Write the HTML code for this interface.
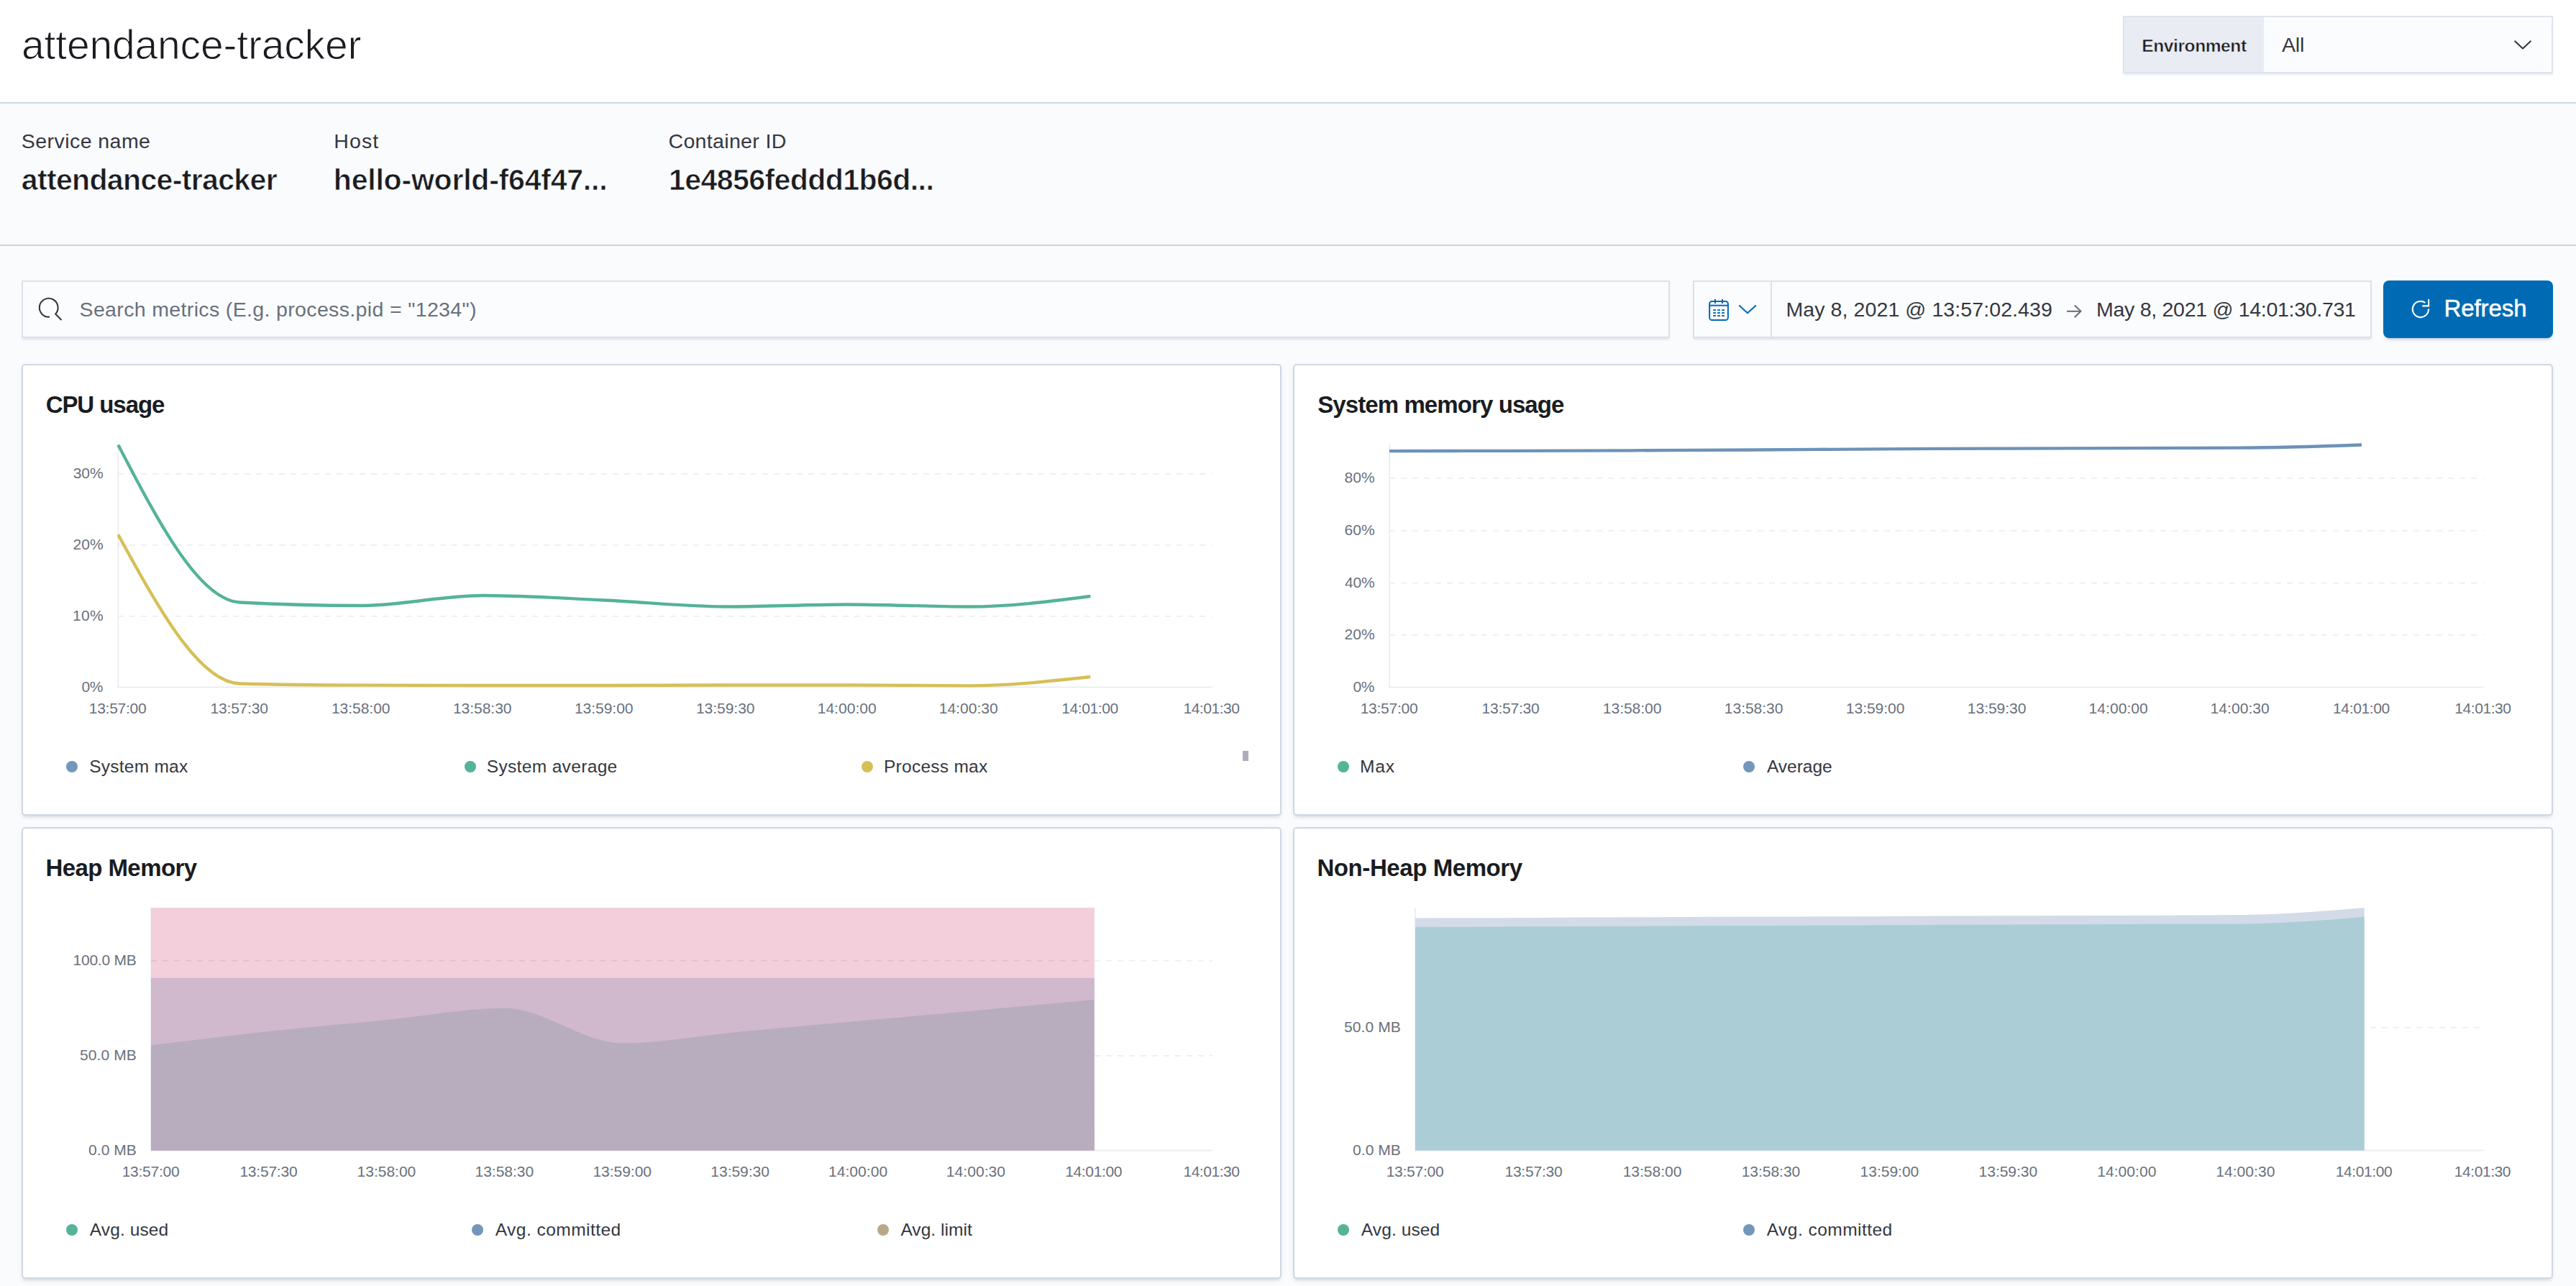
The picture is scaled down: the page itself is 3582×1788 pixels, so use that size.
<!DOCTYPE html>
<html><head><meta charset="utf-8"><title>attendance-tracker</title>
<style>
html,body{margin:0;padding:0;}
body{width:3582px;height:1788px;position:relative;overflow:hidden;background:#fafbfd;font-family:"Liberation Sans",sans-serif;}
div,span,svg{position:absolute;box-sizing:border-box;}
span{white-space:pre;line-height:1;}
</style></head><body>
<div style="left:0px;top:0px;width:3582px;height:143px;background:#fff;"></div>
<div style="left:0px;top:142px;width:3582px;height:2px;background:#cfd7e4;"></div>
<div style="left:0px;top:340px;width:3582px;height:2px;background:#cfd7e4;"></div>
<div style="left:2952px;top:22px;width:598px;height:80px;background:#fbfcfd;border:2px solid #dee3ee;box-shadow:0 3px 3px -1px rgba(152,162,179,.25);"></div>
<div style="left:2954px;top:24px;width:194px;height:76px;background:#e9ecf3;"></div>
<div style="left:30px;top:390px;width:2292px;height:80px;background:#fbfcfd;border:2px solid #dde1ec;box-shadow:0 3px 3px -1px rgba(152,162,179,.3);"></div>
<div style="left:2354px;top:390px;width:944px;height:80px;background:#fbfcfd;border:2px solid #dde1ec;box-shadow:0 3px 3px -1px rgba(152,162,179,.3);"></div>
<div style="left:2462px;top:392px;width:2px;height:76px;background:#dde1ec;"></div>
<div style="left:3314px;top:390px;width:236px;height:80px;background:#006bb4;border-radius:8px;box-shadow:0 4px 5px -3px rgba(60,90,140,.45);"></div>
<div style="left:30px;top:506px;width:1752px;height:628px;background:#fff;border:2px solid #cfd7e4;border-radius:5px;box-shadow:0 4px 4px -2px rgba(152,162,179,.3),0 2px 10px -4px rgba(152,162,179,.3);"></div>
<div style="left:1798px;top:506px;width:1752px;height:628px;background:#fff;border:2px solid #cfd7e4;border-radius:5px;box-shadow:0 4px 4px -2px rgba(152,162,179,.3),0 2px 10px -4px rgba(152,162,179,.3);"></div>
<div style="left:30px;top:1150px;width:1752px;height:628px;background:#fff;border:2px solid #cfd7e4;border-radius:5px;box-shadow:0 4px 4px -2px rgba(152,162,179,.3),0 2px 10px -4px rgba(152,162,179,.3);"></div>
<div style="left:1798px;top:1150px;width:1752px;height:628px;background:#fff;border:2px solid #cfd7e4;border-radius:5px;box-shadow:0 4px 4px -2px rgba(152,162,179,.3),0 2px 10px -4px rgba(152,162,179,.3);"></div>
<div style="left:91.9px;top:1057.9px;width:16.2px;height:16.2px;border-radius:50%;background:#7496bb;"></div>
<div style="left:645.5px;top:1057.9px;width:16.2px;height:16.2px;border-radius:50%;background:#54b399;"></div>
<div style="left:1197.5px;top:1057.9px;width:16.2px;height:16.2px;border-radius:50%;background:#d6bf57;"></div>
<div style="left:1860.0px;top:1057.9px;width:16.2px;height:16.2px;border-radius:50%;background:#54b399;"></div>
<div style="left:2424.0px;top:1057.9px;width:16.2px;height:16.2px;border-radius:50%;background:#7496bb;"></div>
<div style="left:92.0px;top:1701.9px;width:16.2px;height:16.2px;border-radius:50%;background:#54b399;"></div>
<div style="left:655.9px;top:1701.9px;width:16.2px;height:16.2px;border-radius:50%;background:#7496bb;"></div>
<div style="left:1219.9px;top:1701.9px;width:16.2px;height:16.2px;border-radius:50%;background:#b9a888;"></div>
<div style="left:1860.0px;top:1701.9px;width:16.2px;height:16.2px;border-radius:50%;background:#54b399;"></div>
<div style="left:2423.9px;top:1701.9px;width:16.2px;height:16.2px;border-radius:50%;background:#7496bb;"></div>
<div style="left:1728px;top:1044px;width:8px;height:14px;background:#b0abbd;"></div>
<svg width="3582" height="1788" viewBox="0 0 3582 1788" style="left:0;top:0"><line x1="164" y1="658.8" x2="1685.5" y2="658.8" stroke="#eceef3" stroke-width="1.7" stroke-dasharray="8 8"/><line x1="164" y1="757.8" x2="1685.5" y2="757.8" stroke="#eceef3" stroke-width="1.7" stroke-dasharray="8 8"/><line x1="164" y1="856.9" x2="1685.5" y2="856.9" stroke="#eceef3" stroke-width="1.7" stroke-dasharray="8 8"/><line x1="164.3" y1="618" x2="164.3" y2="956.5" stroke="#eceef4" stroke-width="2"/><line x1="163.3" y1="955.5" x2="1685.5" y2="955.5" stroke="#eceef4" stroke-width="2"/><path d="M164.3,618.5C220.6,726.5 277.0,834.5 333.3,837.5C389.6,840.5 446.0,842.0 502.3,842.0C558.6,842.0 615.0,828.0 671.3,828.0C727.6,828.0 784.0,831.9 840.3,834.5C896.6,837.1 953.0,843.5 1009.3,843.5C1065.6,843.5 1122.0,840.5 1178.3,840.5C1234.6,840.5 1291.0,843.5 1347.3,843.5C1403.6,843.5 1460.0,836.2 1516.3,829.0" fill="none" stroke="#54b399" stroke-width="4.3" stroke-linejoin="round"/><path d="M164.3,743.4C220.6,846.2 277.0,949.0 333.3,950.5C389.6,952.0 446.0,952.5 502.3,952.7C558.6,952.9 615.0,953.0 671.3,953.0C727.6,953.0 784.0,953.0 840.3,953.0C896.6,953.0 953.0,952.5 1009.3,952.5C1065.6,952.5 1122.0,952.5 1178.3,952.5C1234.6,952.5 1291.0,953.3 1347.3,953.3C1403.6,953.3 1460.0,947.1 1516.3,941.0" fill="none" stroke="#d6bf57" stroke-width="4.3"/><line x1="1932" y1="664.8" x2="3453.5" y2="664.8" stroke="#eceef3" stroke-width="1.7" stroke-dasharray="8 8"/><line x1="1932" y1="737.9" x2="3453.5" y2="737.9" stroke="#eceef3" stroke-width="1.7" stroke-dasharray="8 8"/><line x1="1932" y1="810.6" x2="3453.5" y2="810.6" stroke="#eceef3" stroke-width="1.7" stroke-dasharray="8 8"/><line x1="1932" y1="882.8" x2="3453.5" y2="882.8" stroke="#eceef3" stroke-width="1.7" stroke-dasharray="8 8"/><line x1="1932" y1="618" x2="1932" y2="956.5" stroke="#eceef4" stroke-width="2"/><line x1="1931" y1="955.5" x2="3453.5" y2="955.5" stroke="#eceef4" stroke-width="2"/><path d="M1932.0,627.2C1988.3,627.1 2044.7,626.9 2101.0,626.8C2157.3,626.6 2213.7,626.5 2270.0,626.3C2326.3,626.1 2382.7,625.8 2439.0,625.5C2495.3,625.2 2551.7,624.6 2608.0,624.3C2664.3,624.0 2720.7,623.8 2777.0,623.6C2833.3,623.4 2889.7,623.2 2946.0,623.1C3002.3,623.0 3058.7,623.0 3115.0,622.7C3171.3,622.4 3227.7,620.5 3284.0,618.5" fill="none" stroke="#6d92b8" stroke-width="4.3"/><line x1="210" y1="1335.6" x2="1685.5" y2="1335.6" stroke="#eceef3" stroke-width="1.7" stroke-dasharray="8 8"/><line x1="210" y1="1467.8" x2="1685.5" y2="1467.8" stroke="#eceef3" stroke-width="1.7" stroke-dasharray="8 8"/><line x1="210" y1="1262" x2="210" y2="1600.5" stroke="#eceef4" stroke-width="2"/><line x1="209" y1="1599.5" x2="1685.5" y2="1599.5" stroke="#eceef4" stroke-width="2"/><rect x="210" y="1262" width="1311.8" height="337.5" fill="#f3cfdb"/><line x1="210" y1="1335.6" x2="1521.8" y2="1335.6" stroke="rgba(130,120,170,.22)" stroke-width="1.2" stroke-dasharray="8 8"/><rect x="210" y="1359.7" width="1311.8" height="239.79999999999995" fill="#d0b8cd"/><path d="M210.0,1453.6C264.6,1446.8 319.3,1439.9 373.9,1434.0C428.5,1428.1 483.2,1423.4 537.8,1418.0C592.4,1412.6 647.1,1401.8 701.7,1401.8C756.3,1401.8 811.0,1450.3 865.6,1450.3C920.2,1450.3 974.9,1439.6 1029.5,1434.5C1084.1,1429.4 1138.8,1424.7 1193.4,1419.8C1248.0,1414.9 1302.7,1409.9 1357.3,1404.9C1411.9,1399.9 1466.6,1395.0 1521.2,1390.0L1521.8,1599.5L210,1599.5Z" fill="#b8acbf"/><line x1="1968" y1="1428.7" x2="3453.5" y2="1428.7" stroke="#eceef3" stroke-width="1.7" stroke-dasharray="8 8"/><line x1="1968" y1="1262" x2="1968" y2="1600.5" stroke="#eceef4" stroke-width="2"/><line x1="1967" y1="1599.5" x2="3453.5" y2="1599.5" stroke="#eceef4" stroke-width="2"/><path d="M1968.0,1276.5C2023.0,1276.3 2078.0,1276.2 2132.9,1276.0C2187.9,1275.8 2242.9,1275.5 2297.9,1275.3C2352.9,1275.1 2407.9,1274.8 2462.8,1274.6C2517.8,1274.4 2572.8,1274.2 2627.8,1274.0C2682.8,1273.8 2737.8,1273.5 2792.8,1273.3C2847.7,1273.1 2902.7,1272.9 2957.7,1272.7C3012.7,1272.5 3067.7,1272.5 3122.6,1272.0C3177.6,1271.5 3232.6,1266.8 3287.6,1262.1L3287.6,1599.5L1968,1599.5Z" fill="#d3dbe9"/><path d="M1968.0,1288.9C2023.0,1288.7 2078.0,1288.5 2132.9,1288.3C2187.9,1288.1 2242.9,1287.8 2297.9,1287.6C2352.9,1287.4 2407.9,1287.1 2462.8,1286.9C2517.8,1286.7 2572.8,1286.4 2627.8,1286.2C2682.8,1286.0 2737.8,1285.8 2792.8,1285.6C2847.7,1285.4 2902.7,1285.2 2957.7,1285.0C3012.7,1284.8 3067.7,1284.8 3122.6,1284.4C3177.6,1284.0 3232.6,1279.4 3287.6,1274.8L3287.6,1599.5L1968,1599.5Z" fill="#abcdd6"/><path d="M68.9,440.6A12.9,12.9 0 1 1 77.1,436.6L85.5,445" fill="none" stroke="#343741" stroke-width="2.1"/><path d="M3496.6,56.8L3508,67.4L3519.4,56.8" fill="none" stroke="#343741" stroke-width="2.1" stroke-linejoin="round"/><path d="M2418.2,424.4L2430,435.3L2441.8,424.4" fill="none" stroke="#006bb4" stroke-width="2.1" stroke-linejoin="round"/><g fill="none" stroke="#006bb4" stroke-width="2"><rect x="2377.1" y="419" width="25.8" height="26" rx="3.6"/><line x1="2377.1" y1="424.7" x2="2402.9" y2="424.7"/><line x1="2385" y1="416.1" x2="2385" y2="421.9"/><line x1="2395" y1="416.1" x2="2395" y2="421.9"/></g><rect x="2382.20" y="430.1" width="3.8" height="1.9" fill="#006bb4"/><rect x="2388.15" y="430.1" width="3.8" height="1.9" fill="#006bb4"/><rect x="2394.10" y="430.1" width="3.8" height="1.9" fill="#006bb4"/><rect x="2382.20" y="434.1" width="3.8" height="1.9" fill="#006bb4"/><rect x="2388.15" y="434.1" width="3.8" height="1.9" fill="#006bb4"/><rect x="2394.10" y="434.1" width="3.8" height="1.9" fill="#006bb4"/><rect x="2382.20" y="438.1" width="3.8" height="1.9" fill="#006bb4"/><rect x="2388.15" y="438.1" width="3.8" height="1.9" fill="#006bb4"/><rect x="2394.10" y="438.1" width="3.8" height="1.9" fill="#006bb4"/><g fill="none" stroke="#69707d" stroke-width="2.1" stroke-linejoin="miter"><line x1="2874" y1="432.8" x2="2893.5" y2="432.8"/><path d="M2884.8,424.6L2893.4,432.8L2884.8,441.2"/></g><g fill="none" stroke="#fff" stroke-width="2.1"><path d="M3376.98,429.42A11.1,11.1 0 1 1 3372.42,421.02"/><path d="M3377.1,416.1V425.4H3368.3"/></g></svg>
<span style="left:2978.30px;top:52px;font-size:24.5px;color:#1a1c21;font-weight:700;letter-spacing:-0.400px;-webkit-text-stroke:0.5px #e9ecf3;">Environment</span>
<span style="left:3173.00px;top:48px;font-size:28.5px;color:#343741;letter-spacing:-0.175px;">All</span>
<span style="left:30.10px;top:34px;font-size:57px;color:#1a1c21;letter-spacing:-0.174px;-webkit-text-stroke:1px #fff;">attendance-tracker</span>
<span style="left:29.85px;top:182px;font-size:28.5px;color:#343741;letter-spacing:0.441px;">Service name</span>
<span style="left:464.35px;top:182px;font-size:28.5px;color:#343741;letter-spacing:1.050px;">Host</span>
<span style="left:929.50px;top:182px;font-size:28.5px;color:#343741;letter-spacing:0.341px;">Container ID</span>
<span style="left:29.75px;top:230px;font-size:41px;color:#1a1c21;font-weight:700;letter-spacing:-0.647px;-webkit-text-stroke:0.7px #fafbfd;">attendance-tracker</span>
<span style="left:463.85px;top:230px;font-size:41px;color:#1a1c21;font-weight:700;letter-spacing:-0.212px;-webkit-text-stroke:0.7px #fafbfd;">hello-world-f64f47...</span>
<span style="left:930.00px;top:230px;font-size:41px;color:#1a1c21;font-weight:700;letter-spacing:-0.556px;-webkit-text-stroke:0.7px #fafbfd;">1e4856feddd1b6d...</span>
<span style="left:110.55px;top:416px;font-size:28.5px;color:#69707d;letter-spacing:0.354px;">Search metrics (E.g. process.pid = "1234")</span>
<span style="left:2483.45px;top:416px;font-size:28.5px;color:#343741;letter-spacing:0.096px;">May 8, 2021 @ 13:57:02.439</span>
<span style="left:2915.05px;top:416px;font-size:28.5px;color:#343741;letter-spacing:-0.284px;">May 8, 2021 @ 14:01:30.731</span>
<span style="left:3398.45px;top:412px;font-size:33px;color:#fff;letter-spacing:-0.058px;-webkit-text-stroke:0.5px #fff;">Refresh</span>
<span style="left:63.65px;top:546px;font-size:33px;color:#1a1c21;font-weight:700;letter-spacing:-1.056px;">CPU usage</span>
<span style="left:1832.20px;top:546px;font-size:33px;color:#1a1c21;font-weight:700;letter-spacing:-0.906px;">System memory usage</span>
<span style="left:63.45px;top:1190px;font-size:33px;color:#1a1c21;font-weight:700;letter-spacing:-0.570px;">Heap Memory</span>
<span style="left:1831.45px;top:1190px;font-size:33px;color:#1a1c21;font-weight:700;letter-spacing:-0.418px;">Non-Heap Memory</span>
<span style="left:123.75px;top:974px;font-size:21px;color:#69707d;letter-spacing:-0.257px;">13:57:00</span>
<span style="left:292.60px;top:974px;font-size:21px;color:#69707d;letter-spacing:-0.214px;">13:57:30</span>
<span style="left:460.90px;top:974px;font-size:21px;color:#69707d;letter-spacing:-0.014px;">13:58:00</span>
<span style="left:629.90px;top:974px;font-size:21px;color:#69707d;letter-spacing:-0.014px;">13:58:30</span>
<span style="left:798.90px;top:974px;font-size:21px;color:#69707d;letter-spacing:-0.014px;">13:59:00</span>
<span style="left:967.90px;top:974px;font-size:21px;color:#69707d;letter-spacing:-0.014px;">13:59:30</span>
<span style="left:1136.65px;top:974px;font-size:21px;color:#69707d;letter-spacing:0.057px;">14:00:00</span>
<span style="left:1305.65px;top:974px;font-size:21px;color:#69707d;letter-spacing:0.057px;">14:00:30</span>
<span style="left:1476.15px;top:974px;font-size:21px;color:#69707d;letter-spacing:-0.371px;">14:01:00</span>
<span style="left:1645.40px;top:974px;font-size:21px;color:#69707d;letter-spacing:-0.443px;">14:01:30</span>
<span style="left:1891.65px;top:974px;font-size:21px;color:#69707d;letter-spacing:-0.257px;">13:57:00</span>
<span style="left:2060.50px;top:974px;font-size:21px;color:#69707d;letter-spacing:-0.214px;">13:57:30</span>
<span style="left:2228.80px;top:974px;font-size:21px;color:#69707d;letter-spacing:-0.014px;">13:58:00</span>
<span style="left:2397.80px;top:974px;font-size:21px;color:#69707d;letter-spacing:-0.014px;">13:58:30</span>
<span style="left:2566.80px;top:974px;font-size:21px;color:#69707d;letter-spacing:-0.014px;">13:59:00</span>
<span style="left:2735.80px;top:974px;font-size:21px;color:#69707d;letter-spacing:-0.014px;">13:59:30</span>
<span style="left:2904.55px;top:974px;font-size:21px;color:#69707d;letter-spacing:0.057px;">14:00:00</span>
<span style="left:3073.55px;top:974px;font-size:21px;color:#69707d;letter-spacing:0.057px;">14:00:30</span>
<span style="left:3244.05px;top:974px;font-size:21px;color:#69707d;letter-spacing:-0.371px;">14:01:00</span>
<span style="left:3413.30px;top:974px;font-size:21px;color:#69707d;letter-spacing:-0.443px;">14:01:30</span>
<span style="left:169.65px;top:1618px;font-size:21px;color:#69707d;letter-spacing:-0.257px;">13:57:00</span>
<span style="left:333.40px;top:1618px;font-size:21px;color:#69707d;letter-spacing:-0.214px;">13:57:30</span>
<span style="left:496.60px;top:1618px;font-size:21px;color:#69707d;letter-spacing:-0.014px;">13:58:00</span>
<span style="left:660.50px;top:1618px;font-size:21px;color:#69707d;letter-spacing:-0.014px;">13:58:30</span>
<span style="left:824.40px;top:1618px;font-size:21px;color:#69707d;letter-spacing:-0.014px;">13:59:00</span>
<span style="left:988.30px;top:1618px;font-size:21px;color:#69707d;letter-spacing:-0.014px;">13:59:30</span>
<span style="left:1151.95px;top:1618px;font-size:21px;color:#69707d;letter-spacing:0.057px;">14:00:00</span>
<span style="left:1315.85px;top:1618px;font-size:21px;color:#69707d;letter-spacing:0.057px;">14:00:30</span>
<span style="left:1481.25px;top:1618px;font-size:21px;color:#69707d;letter-spacing:-0.371px;">14:01:00</span>
<span style="left:1645.40px;top:1618px;font-size:21px;color:#69707d;letter-spacing:-0.443px;">14:01:30</span>
<span style="left:1927.65px;top:1618px;font-size:21px;color:#69707d;letter-spacing:-0.257px;">13:57:00</span>
<span style="left:2092.45px;top:1618px;font-size:21px;color:#69707d;letter-spacing:-0.214px;">13:57:30</span>
<span style="left:2256.70px;top:1618px;font-size:21px;color:#69707d;letter-spacing:-0.014px;">13:58:00</span>
<span style="left:2421.65px;top:1618px;font-size:21px;color:#69707d;letter-spacing:-0.014px;">13:58:30</span>
<span style="left:2586.60px;top:1618px;font-size:21px;color:#69707d;letter-spacing:-0.014px;">13:59:00</span>
<span style="left:2751.55px;top:1618px;font-size:21px;color:#69707d;letter-spacing:-0.014px;">13:59:30</span>
<span style="left:2916.25px;top:1618px;font-size:21px;color:#69707d;letter-spacing:0.057px;">14:00:00</span>
<span style="left:3081.20px;top:1618px;font-size:21px;color:#69707d;letter-spacing:0.057px;">14:00:30</span>
<span style="left:3247.65px;top:1618px;font-size:21px;color:#69707d;letter-spacing:-0.371px;">14:01:00</span>
<span style="left:3412.85px;top:1618px;font-size:21px;color:#69707d;letter-spacing:-0.443px;">14:01:30</span>
<span style="left:101.75px;top:647px;font-size:21px;color:#69707d;letter-spacing:-0.100px;">30%</span>
<span style="left:101.50px;top:746px;font-size:21px;color:#69707d;letter-spacing:0.025px;">20%</span>
<span style="left:101.00px;top:845px;font-size:21px;color:#69707d;letter-spacing:0.275px;">10%</span>
<span style="left:113.45px;top:944px;font-size:21px;color:#69707d;letter-spacing:-0.400px;">0%</span>
<span style="left:1869.50px;top:653px;font-size:21px;color:#69707d;letter-spacing:0.025px;">80%</span>
<span style="left:1869.50px;top:726px;font-size:21px;color:#69707d;letter-spacing:0.025px;">60%</span>
<span style="left:1870.00px;top:799px;font-size:21px;color:#69707d;letter-spacing:-0.225px;">40%</span>
<span style="left:1869.50px;top:871px;font-size:21px;color:#69707d;letter-spacing:0.025px;">20%</span>
<span style="left:1881.45px;top:944px;font-size:21px;color:#69707d;letter-spacing:-0.400px;">0%</span>
<span style="left:101.60px;top:1324px;font-size:21px;color:#69707d;letter-spacing:-0.257px;">100.0 MB</span>
<span style="left:110.95px;top:1456px;font-size:21px;color:#69707d;letter-spacing:0.100px;">50.0 MB</span>
<span style="left:123.05px;top:1588px;font-size:21px;color:#69707d;letter-spacing:0.050px;">0.0 MB</span>
<span style="left:1868.95px;top:1417px;font-size:21px;color:#69707d;letter-spacing:0.100px;">50.0 MB</span>
<span style="left:1881.05px;top:1588px;font-size:21px;color:#69707d;letter-spacing:0.050px;">0.0 MB</span>
<span style="left:124.15px;top:1054px;font-size:24.5px;color:#343741;letter-spacing:0.250px;">System max</span>
<span style="left:676.75px;top:1054px;font-size:24.5px;color:#343741;letter-spacing:0.342px;">System average</span>
<span style="left:1229.00px;top:1054px;font-size:24.5px;color:#343741;letter-spacing:0.265px;">Process max</span>
<span style="left:1891.00px;top:1054px;font-size:24.5px;color:#343741;letter-spacing:0.900px;">Max</span>
<span style="left:2457.00px;top:1054px;font-size:24.5px;color:#343741;letter-spacing:-0.025px;">Average</span>
<span style="left:124.80px;top:1698px;font-size:24.5px;color:#343741;letter-spacing:0.113px;">Avg. used</span>
<span style="left:688.70px;top:1698px;font-size:24.5px;color:#343741;letter-spacing:0.473px;">Avg. committed</span>
<span style="left:1252.40px;top:1698px;font-size:24.5px;color:#343741;letter-spacing:0.056px;">Avg. limit</span>
<span style="left:1892.80px;top:1698px;font-size:24.5px;color:#343741;letter-spacing:0.113px;">Avg. used</span>
<span style="left:2456.70px;top:1698px;font-size:24.5px;color:#343741;letter-spacing:0.473px;">Avg. committed</span>
</body></html>
